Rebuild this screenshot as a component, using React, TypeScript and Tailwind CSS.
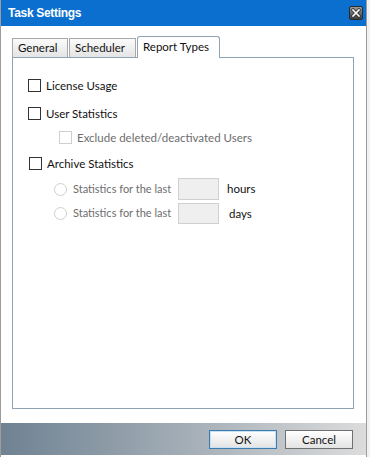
import React from 'react'

const font = { fontFamily: 'Lato, "Liberation Sans", sans-serif' }

function Check({ disabled }: { disabled?: boolean }) {
  return (
    <span
      className={`block w-[13px] h-[13px] border bg-white shrink-0 ${
        disabled ? 'border-[#cfcfcf]' : 'border-[#333333]'
      }`}
    />
  )
}

function Radio() {
  return (
    <span className="block w-[13px] h-[13px] rounded-full border border-[#cfcfcf] bg-white shrink-0" />
  )
}

function CloseButton() {
  return (
    <div className="w-[14px] h-[14px] rounded-[2px] border border-[#2a2a2a] bg-gradient-to-b from-[#9a9a9a] to-[#3f3f3f] flex items-center justify-center">
      <svg width="10" height="10" viewBox="0 0 10 10">
        <path d="M2 2 L8 8 M8 2 L2 8" stroke="#333" strokeWidth="3.2" strokeLinecap="square" />
        <path d="M2 2 L8 8 M8 2 L2 8" stroke="#fff" strokeWidth="1.6" strokeLinecap="square" />
      </svg>
    </div>
  )
}

export default function App() {
  return (
    <div className="w-[370px] h-[457px] bg-[#f2f2f2] text-[11px] text-[#111] whitespace-nowrap" style={font}>
      <div className="w-[367px] h-[457px] flex flex-col border-l border-r border-[#9c9c9c] bg-white">
        {/* title bar */}
        <div className="h-[26px] bg-[#0a6fcf] flex items-center justify-between pl-[7px] pr-[3px]">
          <span
            className="text-white font-bold text-[12px] tracking-[-0.3px]"
            style={{ fontFamily: '"Liberation Sans", sans-serif' }}
          >
            Task Settings
          </span>
          <CloseButton />
        </div>

        {/* tabs */}
        <div className="flex items-end pl-[11px] pt-[10px] h-[31px] text-[11.5px]">
          <div className="w-[56px] h-[19px] border border-b-0 border-[#a9a9a9] bg-gradient-to-b from-[#fbfbfb] to-[#e4e4e4] pl-[5px] leading-[18px]">
            General
          </div>
          <div className="w-[67px] h-[19px] ml-[1px] border border-b-0 border-[#a9a9a9] bg-gradient-to-b from-[#fbfbfb] to-[#e4e4e4] pl-[5px] leading-[18px]">
            Scheduler
          </div>
          <div className="w-[83px] h-[22px] ml-[1px] border border-b-0 border-[#8fa3b5] rounded-t-[3px] bg-white pl-[5px] leading-[20px] relative top-[1px]">
            Report Types
          </div>
        </div>

        {/* tab panel */}
        <div className="ml-[11px] w-[342px] h-[352px] border border-[#8fa3b5] flex flex-col pt-[21px] pl-[15px] text-[11.5px]">
          <label className="flex items-center gap-[5px] h-[13px]">
            <Check />
            <span>License Usage</span>
          </label>
          <label className="flex items-center gap-[5px] h-[13px] mt-[15px]">
            <Check />
            <span>User Statistics</span>
          </label>
          <label className="flex items-center gap-[5px] h-[13px] mt-[11px] ml-[31px] text-[#6d6d6d]">
            <Check disabled />
            <span>Exclude deleted/deactivated Users</span>
          </label>
          <label className="flex items-center gap-[5px] h-[13px] mt-[13px] ml-[1px]">
            <Check />
            <span>Archive Statistics</span>
          </label>
          <div className="flex items-center mt-[8px] ml-[26px] h-[22px] text-[#6d6d6d]">
            <Radio />
            <span className="ml-[6px] w-[105px] text-[11px]">Statistics for the last</span>
            <span className="w-[41px] h-[22px] border border-[#d0d0d0] bg-[#efefef]" />
            <span className="ml-[8px] text-[#111]">hours</span>
          </div>
          <div className="flex items-center mt-[3px] ml-[26px] h-[21px] text-[#6d6d6d]">
            <Radio />
            <span className="ml-[6px] w-[105px] text-[11px]">Statistics for the last</span>
            <span className="w-[41px] h-[21px] border border-[#d0d0d0] bg-[#efefef]" />
            <span className="ml-[10px] text-[#111]">days</span>
          </div>
        </div>

        <div className="flex-1" />

        {/* footer */}
        <div className="h-[32px] mb-[2px] bg-gradient-to-r from-[#6f8292] via-[#a3adb6] to-[#dcdcdc] flex items-center justify-end gap-[8px] pr-[13px] text-[11.5px]">
          <button className="w-[68px] h-[19px] border border-[#3d7bad] bg-gradient-to-b from-[#ffffff] to-[#e3e3e3] leading-[17px] shadow-[inset_0_0_0_1px_#c8e0f4]">
            OK
          </button>
          <button className="w-[68px] h-[19px] border border-[#707070] bg-gradient-to-b from-[#ffffff] to-[#e3e3e3] leading-[17px]">
            Cancel
          </button>
        </div>
      </div>
    </div>
  )
}
